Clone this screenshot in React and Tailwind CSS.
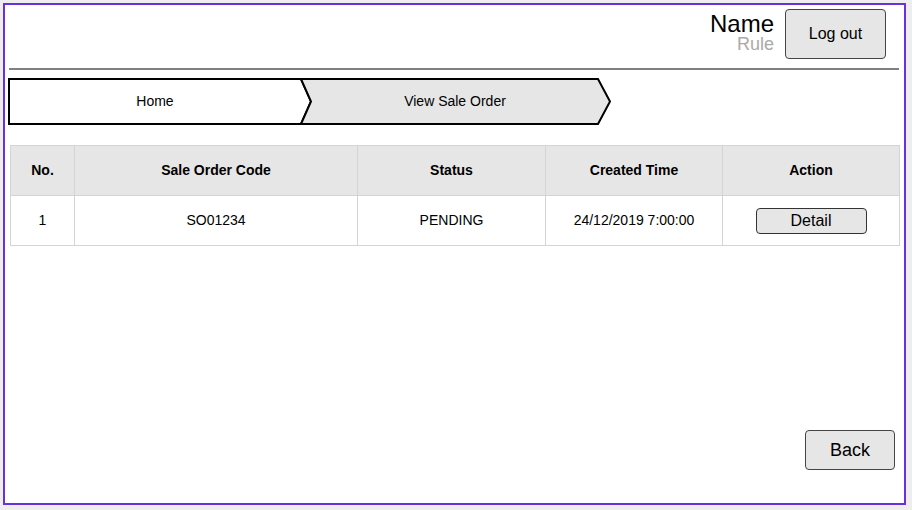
import React from 'react';

const font = { fontFamily: '"Liberation Sans", Arial, sans-serif' };

const Breadcrumb = () => {
  return (
    <div className="relative ml-[3px] mt-2 w-[604px] h-[47px]">
      <svg className="absolute inset-0" width="604" height="47" viewBox="0 0 604 47">
        <polygon points="1,1 293,1 303,23.5 293,46 1,46" fill="#ffffff" stroke="#000" strokeWidth="2" />
        <polygon points="293,1 590,1 602,23.5 590,46 293,46 303,23.5" fill="#e6e6e6" stroke="#000" strokeWidth="2" strokeLinejoin="miter" />
      </svg>
      <div className="relative flex h-full items-center text-[14px] text-black">
        <div className="w-[294px] text-center">Home</div>
        <div className="w-[306px] text-center">View Sale Order</div>
      </div>
    </div>
  );
};

const cols = [
  { label: 'No.', w: 'w-[64px]' },
  { label: 'Sale Order Code', w: 'w-[283px]' },
  { label: 'Status', w: 'w-[188px]' },
  { label: 'Created Time', w: 'w-[177px]' },
  { label: 'Action', w: 'w-[177px]' },
];

const OrderTable = () => {
  return (
    <table className="ml-[5px] mt-5 w-[889px] border-collapse table-fixed text-[14px] text-black">
      <thead>
        <tr className="h-[50px] bg-[#e6e6e6]">
          {cols.map((c) => (
            <th key={c.label} className={`${c.w} border border-[#d4d4d4] font-bold`}>{c.label}</th>
          ))}
        </tr>
      </thead>
      <tbody>
        <tr className="h-[50px] bg-white">
          <td className="border border-[#d4d4d4] text-center">1</td>
          <td className="border border-[#d4d4d4] text-center">SO01234</td>
          <td className="border border-[#d4d4d4] text-center">PENDING</td>
          <td className="border border-[#d4d4d4] text-center">24/12/2019 7:00:00</td>
          <td className="border border-[#d4d4d4] text-center">
            <button className="w-[111px] h-[26px] rounded-[4px] border border-[#333] bg-[#e6e6e6] text-[16px] leading-none">Detail</button>
          </td>
        </tr>
      </tbody>
    </table>
  );
};

export default function App() {
  return (
    <div className="w-[912px] h-[510px] bg-[#eeeeee] pl-[3px] pt-[3px]" style={font}>
      <div className="flex flex-col w-[903px] h-[502px] border-2 border-[#6a2fe0] bg-white">
        <header className="flex items-start justify-end pr-[18px] pt-[4px] h-[63px]">
          <div className="flex flex-col items-end pt-[3px] mr-[11px]">
            <span className="text-[24px] leading-[23px] text-black">Name</span>
            <span className="text-[18px] leading-[19px] text-[#aaaaaa]">Rule</span>
          </div>
          <button className="w-[101px] h-[50px] shrink-0 rounded-[4px] border border-[#444] bg-[#e6e6e6] text-[16px] text-black">
            Log out
          </button>
        </header>
        <div className="ml-[4px] mr-[5px] h-[2px] bg-[#808080]" />
        <Breadcrumb />
        <OrderTable />
        <div className="flex-1" />
        <div className="flex justify-end pr-[9px] pb-[33px]">
          <button className="w-[90px] h-[40px] shrink-0 rounded-[4px] border border-[#444] bg-[#e6e6e6] text-[18px] text-black">
            Back
          </button>
        </div>
      </div>
    </div>
  );
}
